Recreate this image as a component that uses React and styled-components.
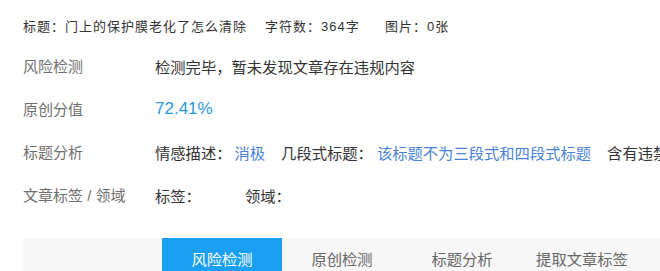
import React from 'react'
import styled, { createGlobalStyle } from 'styled-components'

const GlobalStyle = createGlobalStyle`
  html, body {
    margin: 0;
    padding: 0;
    background: #fff;
    overflow: hidden;
  }
  body {
    font-family: "Liberation Sans", "Noto Sans CJK SC", sans-serif;
  }
`

const Page = styled.div`
  width: 660px;
  height: 271px;
  overflow: hidden;
  padding: 18px 0 0 23px;
  box-sizing: border-box;
`

const Header = styled.div`
  display: flex;
  font-size: 13px;
  line-height: 18px;
  letter-spacing: 1px;
  color: #333;
  white-space: nowrap;
`

const HeaderItem = styled.span`
  width: ${p => p.$w}px;
  flex: none;
`

const Rows = styled.div`
  margin-top: 8px;
`

const Row = styled.div`
  display: grid;
  grid-template-columns: 132px 1fr;
  height: 43px;
  align-items: center;
  font-size: 15.3px;
  white-space: nowrap;
`

const Label = styled.span`
  color: #6f6f6f;
  font-size: 15px;
`

const Value = styled.div`
  display: flex;
  align-items: center;
  color: #333;
  overflow: hidden;
`

const Blue = styled.span`
  color: ${p => (p.$strong ? '#2b98e0' : '#4a83d6')};
  font-size: ${p => (p.$strong ? '17px' : 'inherit')};
  margin-right: ${p => p.$gap || 0}px;
`

const Plain = styled.span`
  margin-right: ${p => p.$gap || 0}px;
`

const TabBar = styled.div`
  margin-top: 22px;
  height: 40px;
  background: #f7f7f7;
  display: flex;
  padding-left: 139px;
`

const Tab = styled.div`
  width: 120px;
  flex: none;
  display: flex;
  align-items: center;
  justify-content: center;
  font-size: 15.3px;
  color: ${p => (p.$active ? '#fff' : '#666')};
  background: ${p => (p.$active ? '#19a0f2' : 'transparent')};
`

const tabs = ['风险检测', '原创检测', '标题分析', '提取文章标签']

export default function App() {
  return (
    <>
      <GlobalStyle />
      <Page>
        <Header>
          <HeaderItem $w={242}>标题：门上的保护膜老化了怎么清除</HeaderItem>
          <HeaderItem $w={120}>字符数：364字</HeaderItem>
          <HeaderItem $w={100}>图片：0张</HeaderItem>
        </Header>
        <Rows>
          <Row>
            <Label>风险检测</Label>
            <Value>检测完毕，暂未发现文章存在违规内容</Value>
          </Row>
          <Row>
            <Label>原创分值</Label>
            <Value>
              <Blue $strong>72.41%</Blue>
            </Value>
          </Row>
          <Row>
            <Label>标题分析</Label>
            <Value>
              <Plain $gap={3}>情感描述：</Plain>
              <Blue $gap={16}>消极</Blue>
              <Plain $gap={4}>几段式标题：</Plain>
              <Blue $gap={16}>该标题不为三段式和四段式标题</Blue>
              <Plain>含有违禁词：</Plain>
            </Value>
          </Row>
          <Row>
            <Label>文章标签 / 领域</Label>
            <Value>
              <Plain $gap={44}>标签：</Plain>
              <Plain>领域：</Plain>
            </Value>
          </Row>
        </Rows>
        <TabBar>
          {tabs.map((t, i) => (
            <Tab key={t} $active={i === 0}>{t}</Tab>
          ))}
        </TabBar>
      </Page>
    </>
  )
}
